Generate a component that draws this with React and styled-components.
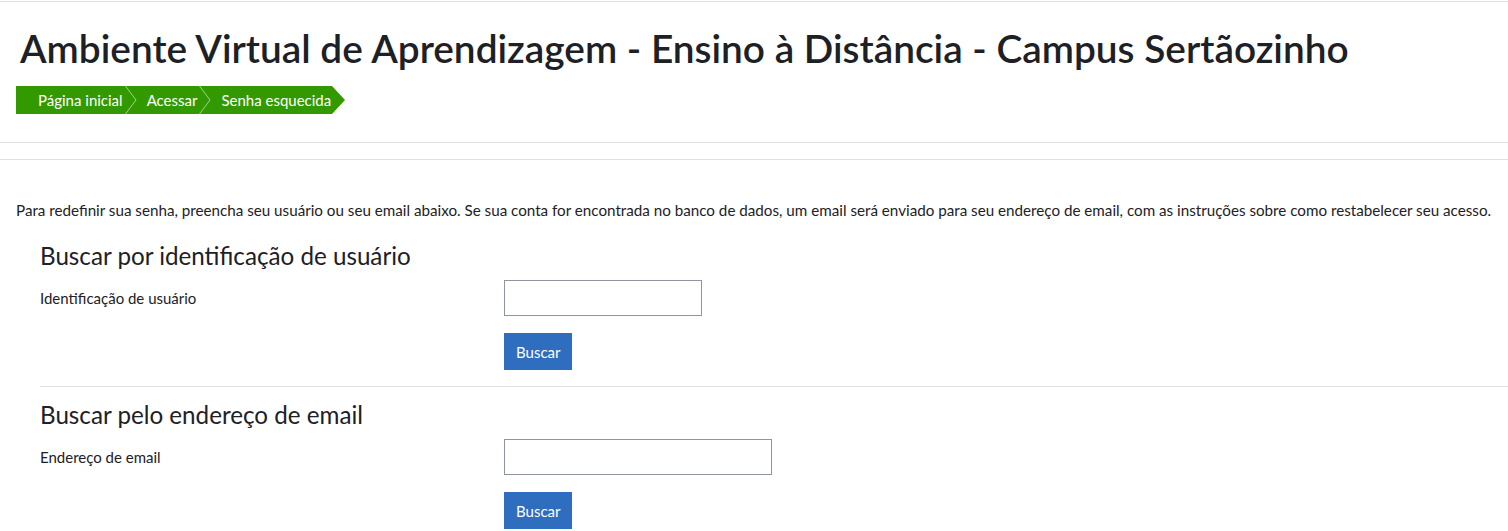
import styled, { createGlobalStyle } from 'styled-components';

const GlobalStyle = createGlobalStyle`
  html, body { margin: 0; padding: 0; background: #fff; }
  body {
    font-family: Lato, "Noto Sans", sans-serif;
    color: #1d2125;
    font-size: 15px;
  }
  * { box-sizing: border-box; }
`;

const Header = styled.header`
  margin-top: 1px;
  border-top: 1px solid #dee2e6;
  border-bottom: 1px solid #dee2e6;
  padding: 23px 16px 28px;
`;

const Title = styled.h1`
  margin: 0 0 14px 4px;
  font-size: 38.8px;
  font-weight: 600;
  line-height: 47px;
  color: #1d2125;
`;

const Crumbs = styled.nav`
  display: flex;
  align-items: stretch;
  height: 28px;
  width: max-content;
  background: #339900;
  padding-left: 22px;
  position: relative;
  &::after {
    content: '';
    position: absolute;
    right: -13px;
    top: 0;
    border-left: 13px solid #339900;
    border-top: 14px solid transparent;
    border-bottom: 14px solid transparent;
  }
`;

const Crumb = styled.a`
  display: flex;
  align-items: center;
  color: #fff;
  font-size: 15px;
  text-decoration: none;
  padding-right: ${({ $last }) => ($last ? '1px' : '2px')};
`;

const Sep = styled.svg`
  width: 12px;
  height: 28px;
  margin-right: 10px;
  flex-shrink: 0;
`;

const Spacer = styled.div`
  height: 17px;
  border-bottom: 1px solid #dee2e6;
`;

const Main = styled.main`
  padding: 40px 0 0 16px;
`;

const Intro = styled.p`
  margin: 0 0 20px;
  font-size: 15.2px;
  line-height: 20px;
`;

const Fieldset = styled.section`
  margin-left: 24px;
  padding-bottom: ${({ $divider }) => ($divider ? '16px' : '0')};
  border-bottom: ${({ $divider }) => ($divider ? '1px solid #dee2e6' : 'none')};
  margin-bottom: ${({ $divider }) => ($divider ? '12px' : '0')};
`;

const Legend = styled.h3`
  margin: 0 0 8px;
  font-size: 24.2px;
  font-weight: 400;
  line-height: 32px;
`;

const Row = styled.div`
  display: flex;
  align-items: center;
  margin-bottom: 17px;
  &:last-child { margin-bottom: 0; }
`;

const Label = styled.label`
  width: 464px;
  flex-shrink: 0;
  font-size: 15px;
`;

const Input = styled.input`
  width: ${({ $w }) => $w}px;
  height: 36px;
  border: 1px solid #8f959e;
  border-radius: 0;
  padding: 6px 12px;
  font: inherit;
  outline: none;
`;

const Button = styled.button`
  height: 37px;
  padding: 0 12px;
  border: none;
  border-radius: 0;
  background: #2f6dbf;
  color: #fff;
  font: inherit;
  font-size: 15px;
  cursor: pointer;
`;

function Chevron() {
  return (
    <Sep viewBox="0 0 12 28">
      <polyline points="0.5,0 11,14 0.5,28" fill="none" stroke="rgba(255,255,255,0.55)" strokeWidth="1" />
    </Sep>
  );
}

const sections = [
  { legend: 'Buscar por identificação de usuário', label: 'Identificação de usuário', w: 198, divider: true },
  { legend: 'Buscar pelo endereço de email', label: 'Endereço de email', w: 268 },
];

export default function App() {
  return (
    <>
      <GlobalStyle />
      <Header>
        <Title>Ambiente Virtual de Aprendizagem - Ensino à Distância - Campus Sertãozinho</Title>
        <Crumbs>
          <Crumb href="#">Página inicial</Crumb>
          <Chevron />
          <Crumb href="#">Acessar</Crumb>
          <Chevron />
          <Crumb href="#" $last>Senha esquecida</Crumb>
        </Crumbs>
      </Header>
      <Spacer />
      <Main>
        <Intro>
          Para redefinir sua senha, preencha seu usuário ou seu email abaixo. Se sua conta for encontrada no banco de dados, um email será enviado para seu endereço de email, com as instruções sobre como restabelecer seu acesso.
        </Intro>
        {sections.map((s) => (
          <Fieldset key={s.legend} $divider={s.divider}>
            <Legend>{s.legend}</Legend>
            <Row>
              <Label>{s.label}</Label>
              <Input type="text" $w={s.w} />
            </Row>
            <Row>
              <Label />
              <Button type="button">Buscar</Button>
            </Row>
          </Fieldset>
        ))}
      </Main>
    </>
  );
}
